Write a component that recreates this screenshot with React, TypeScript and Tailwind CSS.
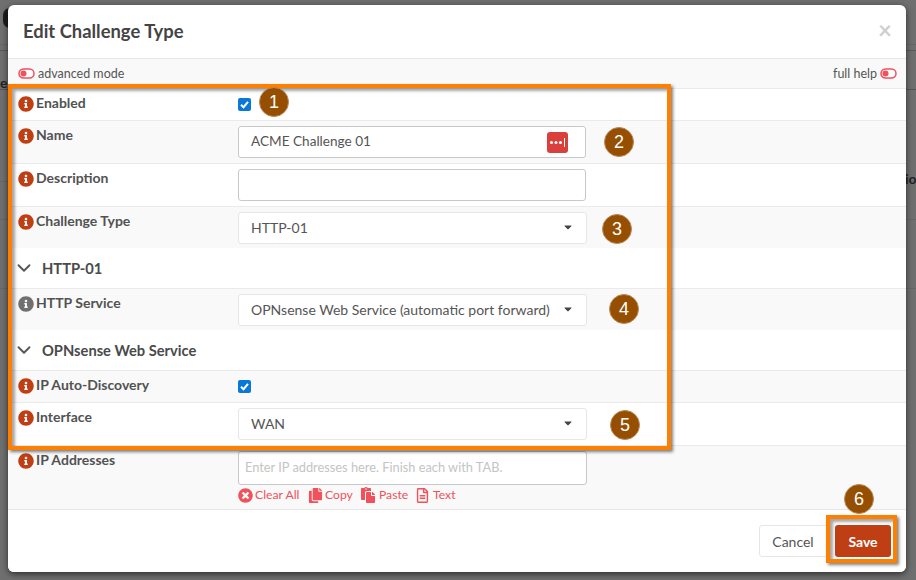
import { FaInfoCircle, FaTimesCircle, FaCopy, FaPaste, FaRegFileAlt, FaCaretDown } from 'react-icons/fa';
import { ChevronDown } from 'lucide-react';

const font = 'font-["Lato","Noto_Sans",sans-serif]';

function Toggle() {
  return (
    <svg width="17" height="11" viewBox="0 0 17 11" className="shrink-0">
      <rect x="1" y="1" width="15" height="9" rx="4.5" fill="white" stroke="#f0515a" strokeWidth="1.5" />
      <circle cx="5.5" cy="5.5" r="3" fill="#f0515a" />
    </svg>
  );
}

function Label({ text, gray }: { text: string; gray?: boolean }) {
  return (
    <div className="w-[220px] shrink-0 flex items-start gap-[2px] text-[14px] font-bold leading-[16px] text-[#525252]">
      <FaInfoCircle className={`mt-[1px] text-[16px] shrink-0 ${gray ? 'text-[#707070]' : 'text-[#c03e14]'}`} />
      <span>{text}</span>
    </div>
  );
}

function Row({ label, gray, alt, h, children }: { label: string; gray?: boolean; alt?: boolean; h: string; children?: React.ReactNode }) {
  return (
    <div className={`flex pl-[10px] pt-[6px] border-t border-[#eaeaea] ${h} ${alt ? 'bg-[#f9f9f9]' : 'bg-white'}`}>
      <Label text={label} gray={gray} />
      {children}
    </div>
  );
}

function Select({ value }: { value: string }) {
  return (
    <div className="w-[349px] h-[32px] -mt-[1px] pb-[2px] flex items-center justify-between pl-[12px] pr-[12px] bg-white border border-[#e6e6e6] rounded-[3px] text-[14px] text-[#555]">
      <span>{value}</span>
      <FaCaretDown className="text-[12px] text-[#444]" />
    </div>
  );
}

function Section({ title }: { title: string }) {
  return (
    <div className="h-[40px] flex items-center pl-[5px] bg-white text-[14.7px] font-bold text-[#4a4a4a]">
      <ChevronDown size={22} strokeWidth={2} className="text-[#555] mr-[7px]" />
      <span>{title}</span>
    </div>
  );
}

function Check() {
  return (
    <div className="w-[13px] h-[13px] mt-[3px] rounded-[2px] bg-[#0a78d7] flex items-center justify-center">
      <svg width="11" height="11" viewBox="0 0 11 11">
        <path d="M2 5.8 L4.5 8.2 L9 2.8" fill="none" stroke="white" strokeWidth="2" />
      </svg>
    </div>
  );
}

function Badge({ n, pos }: { n: number; pos: string }) {
  return (
    <div className={`absolute w-[30px] h-[30px] rounded-full bg-[#964f00] border border-[#b98a5c] flex items-center justify-center text-white text-[18px] font-["Liberation_Sans",sans-serif] ${pos}`}>
      {n}
    </div>
  );
}

export default function App() {
  return (
    <div className={`relative w-[916px] h-[580px] overflow-hidden bg-[#6f6f6f] pl-[8px] pt-[5px] ${font}`}>
      {/* dimmed page behind the dialog */}
      <div className="absolute left-[3px] top-[8px] w-[14px] h-[20px] rounded-full bg-[#1c1c1c]" />
      <div className="absolute left-0 top-[44px] w-full h-px bg-[#666]" />
      <div className="absolute left-0 top-[50px] w-full h-px bg-[#5a5a5a]" />
      <div className="absolute left-0 top-[89px] w-full h-px bg-[#555]" />
      <div className="absolute left-0 top-[181px] w-full h-px bg-[#666]" />
      <div className="absolute left-0 top-[219px] w-full h-px bg-[#666]" />
      <div className="absolute left-0 top-[288px] w-full h-px bg-[#666]" />
      <span className="absolute left-0 top-[72px] text-[14px] font-bold text-[#222]">e</span>
      <span className="absolute left-[905px] top-[168px] text-[14px] font-bold text-[#222]">io</span>

      <div className="relative w-[898px] h-[567px] bg-white rounded-[6px] shadow-[0_2px_6px_rgba(0,0,0,0.6)] overflow-hidden flex flex-col">
        {/* Header */}
        <div className="h-[53px] shrink-0 flex items-center justify-between pl-[15px] pr-[14px]">
          <h1 className="text-[18.4px] font-bold text-[#444]">Edit Challenge Type</h1>
          <span className="text-[24px] font-bold leading-none text-[#cfcfcf] -mt-[4px]">×</span>
        </div>

        {/* Toolbar */}
        <div className="h-[30px] shrink-0 flex items-center justify-between pl-[10px] pr-[9px] bg-[#f9f9f9] border-t border-[#e5e5e5] text-[12.5px] text-[#555]">
          <div className="flex items-center gap-[3px]">
            <Toggle />
            <span className="mt-[1px]">advanced mode</span>
          </div>
          <div className="flex items-center gap-[3px]">
            <span className="mt-[1px]">full help</span>
            <Toggle />
          </div>
        </div>

        {/* Form */}
        <Row label="Enabled" h="h-[32px]">
          <Check />
        </Row>
        <Row label="Name" alt h="h-[43px]">
          <div className="w-[348px] h-[32px] -mt-[1px] flex items-center justify-between pl-[12px] pr-[17px] bg-white border border-[#c8c8c8] rounded-[3px] text-[13.6px] text-[#555]">
            <span className="-mt-[1px]">ACME Challenge 01</span>
            <svg width="21" height="21" viewBox="0 0 21 21">
              <rect width="21" height="21" rx="3" fill="#d9403b" />
              <circle cx="4.5" cy="10.5" r="1.5" fill="white" />
              <circle cx="9" cy="10.5" r="1.5" fill="white" />
              <circle cx="13.5" cy="10.5" r="1.5" fill="white" />
              <rect x="17" y="6" width="1" height="9" fill="white" />
            </svg>
          </div>
        </Row>
        <Row label="Description" h="h-[43px]">
          <div className="w-[348px] h-[32px] -mt-[1px] bg-white border border-[#c8c8c8] rounded-[3px]" />
        </Row>
        <Row label="Challenge Type" alt h="h-[42px]">
          <Select value="HTTP-01" />
        </Row>
        <Section title="HTTP-01" />
        <Row label="HTTP Service" gray alt h="h-[42px]">
          <Select value="OPNsense Web Service (automatic port forward)" />
        </Row>
        <Section title="OPNsense Web Service" />
        <Row label="IP Auto-Discovery" alt h="h-[32px]">
          <Check />
        </Row>
        <Row label="Interface" h="h-[43px]">
          <Select value="WAN" />
        </Row>
        <Row label="IP Addresses" alt h="h-[64px]">
          <div className="-mt-[1px]">
            <div className="w-[349px] h-[34px] flex items-center pl-[6px] bg-white border border-[#c8c8c8] rounded-[3px] text-[12.8px] text-[#c4c4c4]">
              Enter IP addresses here. Finish each with TAB.
            </div>
            <div className="mt-[2px] flex items-center text-[12.2px] leading-[16px] text-[#f0515a]">
              <FaTimesCircle className="text-[15px] mr-[2px]" />
              <span className="w-[46px]">Clear All</span>
              <FaCopy className="text-[15px] ml-[7px] mr-[2px]" />
              <span className="w-[29px]">Copy</span>
              <FaPaste className="text-[16px] ml-[6px] mr-[3px]" />
              <span className="w-[29px]">Paste</span>
              <FaRegFileAlt className="text-[15px] ml-[7px] mr-[3px]" />
              <span>Text</span>
            </div>
          </div>
        </Row>

        {/* Footer */}
        <div className="flex-1 flex items-start justify-end pt-[15px] pr-[15px] border-t border-[#e5e5e5] bg-white">
          <button className="h-[32px] w-[68px] bg-white border border-[#e6e6e6] rounded-l-[3px] text-[14px] text-[#555]">Cancel</button>
          <button className="h-[32px] w-[56px] ml-[8px] bg-[#c03e14] rounded-[3px] text-[14px] font-bold text-white">Save</button>
        </div>
      </div>

      {/* Annotations over the screenshot */}
      <div className="absolute left-[8px] top-[84px] w-[663px] h-[366px] border-[4px] border-[#ff8000] shadow-[2px_2px_3px_rgba(0,0,0,0.5),inset_3px_3px_3px_rgba(0,0,0,0.35)]" />
      <div className="absolute left-[826px] top-[515px] w-[71px] h-[48px] border-[4px] border-[#ff8000] shadow-[2px_2px_3px_rgba(0,0,0,0.5),inset_3px_3px_3px_rgba(0,0,0,0.35)]" />
      <Badge n={1} pos="left-[259px] top-[87px]" />
      <Badge n={2} pos="left-[604px] top-[127px]" />
      <Badge n={3} pos="left-[602px] top-[214px]" />
      <Badge n={4} pos="left-[609px] top-[294px]" />
      <Badge n={5} pos="left-[610px] top-[410px]" />
      <Badge n={6} pos="left-[844px] top-[484px]" />
    </div>
  );
}
